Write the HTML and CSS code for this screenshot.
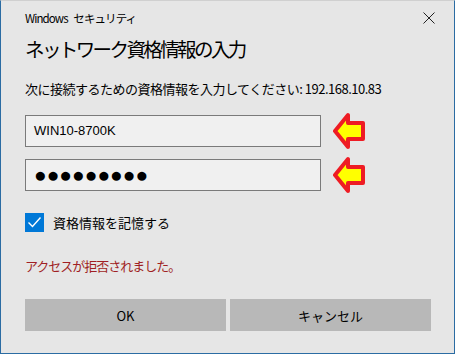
FILE: index.html
```html
<!DOCTYPE html>
<html lang="ja">
  <head>
    <meta charset="UTF-8" />
    <title>Windows セキュリティ</title>
    <link rel="stylesheet" href="styles.css">
  </head>
  <body>
    <div class="dialog">
      <div class="caption">
        <span class="caption-text">Windows セキュリティ</span>
        <svg class="close" width="12" height="12" viewBox="0 0 12 12">
          <path d="M0.5 0.5 L11.5 11.5 M11.5 0.5 L0.5 11.5" stroke="#222" stroke-width="1" fill="none"/>
        </svg>
      </div>
      <p class="title">ネットワーク資格情報の入力</p>
      <p class="message">次に接続するための資格情報を入力してください: 192.168.10.83</p>

      <div class="field-row">
        <div class="field">WIN10-8700K</div>
        <svg class="arrow" width="32" height="38" viewBox="0 0 32 38">
          <path d="M2 19 L15 3 L15 11 L30 11 L30 27 L15 27 L15 35 Z" fill="#ffff00" stroke="#ee1c24" stroke-width="4" stroke-linejoin="round"/>
        </svg>
      </div>
      <div class="field-row">
        <div class="field password">●●●●●●●●●</div>
        <svg class="arrow" width="32" height="38" viewBox="0 0 32 38">
          <path d="M2 19 L15 3 L15 11 L30 11 L30 27 L15 27 L15 35 Z" fill="#ffff00" stroke="#ee1c24" stroke-width="4" stroke-linejoin="round"/>
        </svg>
      </div>

      <label class="remember">
        <span class="checkbox">
          <svg width="19" height="19" viewBox="0 0 19 19">
            <path d="M3.5 9.5 L7.5 13.5 L15.5 4.5" stroke="#fff" stroke-width="1.4" fill="none"/>
          </svg>
        </span>
        資格情報を記憶する
      </label>

      <p class="error">アクセスが拒否されました。</p>

      <div class="buttons">
        <button class="btn">OK</button>
        <button class="btn">キャンセル</button>
      </div>
    </div>
  </body>
</html>
```

FILE: styles.css
```css
body {
  margin: 0;
  background-color: #ffffff;
  font-family: "Noto Sans CJK JP", "Noto Sans", sans-serif;
  color: #000;
}

.dialog {
  width: 455px;
  height: 354px;
  box-sizing: border-box;
  background-color: #e6e6e6;
  border: 1px solid #2b6ca3;
  border-top-color: #d0d0d0;
  padding: 0 24px 0 24px;
}

.caption {
  display: flex;
  justify-content: space-between;
  align-items: center;
  height: 34px;
}

.caption-text {
  font-size: 11.5px;
  letter-spacing: -0.9px;
  word-spacing: 4px;
}

.close {
  margin-right: -5px;
}

.title {
  font-size: 19.5px;
  letter-spacing: -2.6px;
  margin: 0;
  line-height: 28px;
  height: 28px;
}

.message {
  font-size: 13px;
  letter-spacing: -0.5px;
  margin: 16px 0 0 0;
  line-height: 20px;
}

.field-row {
  display: flex;
  align-items: center;
  gap: 12px;
  height: 32px;
  margin-top: 16px;
}

.field-row + .field-row {
  margin-top: 12px;
}

.arrow {
  margin: -3px 0;
}

.field {
  width: 296px;
  height: 32px;
  box-sizing: border-box;
  background-color: #f0f0f0;
  border: 1px solid #7a7a7a;
  padding-left: 8px;
  font-family: "Liberation Sans", Arial, sans-serif;
  font-size: 13px;
  line-height: 30px;
}

.password {
  font-size: 21px;
  letter-spacing: 0;
}

.remember {
  display: flex;
  align-items: center;
  gap: 9px;
  font-size: 13px;
  margin-top: 22px;
}

.checkbox {
  width: 19px;
  height: 19px;
  background-color: #0078d7;
  display: block;
}

.checkbox svg {
  display: block;
}

.error {
  color: #a01f24;
  font-size: 13px;
  letter-spacing: -1px;
  margin: 24px 0 0 0;
  line-height: 20px;
}

.buttons {
  display: flex;
  gap: 4px;
  margin-top: 23px;
  width: 406px;
}

.btn {
  flex: 1;
  height: 32px;
  border: none;
  background-color: #b8b8b8;
  font-family: "Noto Sans CJK JP", "Noto Sans", sans-serif;
  font-size: 13px;
  color: #000;
}
```
